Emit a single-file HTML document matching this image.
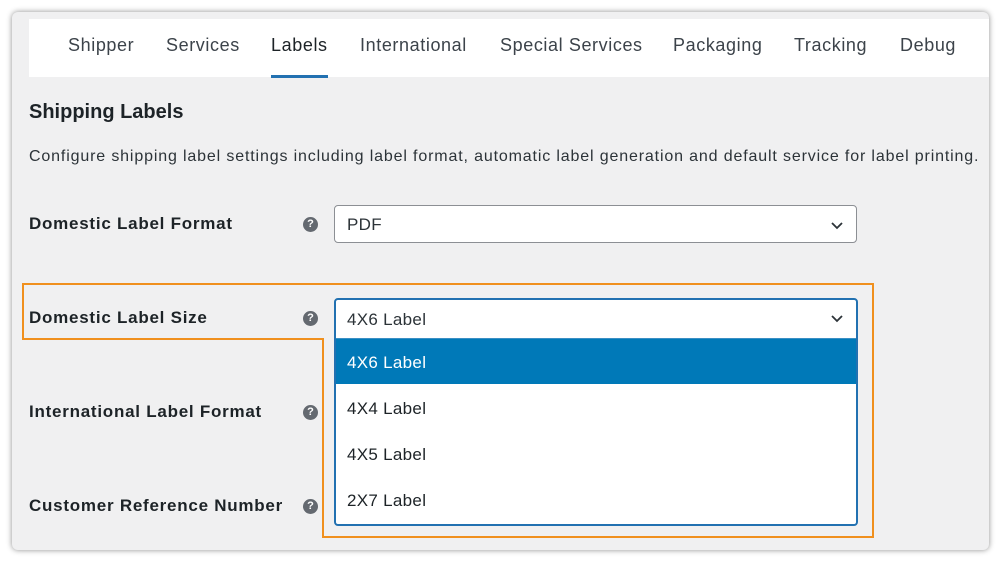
<!DOCTYPE html>
<html><head><style>
*{margin:0;padding:0;box-sizing:border-box}
body{width:1000px;height:562px;background:#fff;position:relative;overflow:hidden;font-family:"Liberation Sans",sans-serif;color:#1d2327}
.panel{position:absolute;left:12px;top:12px;width:977px;height:538px;background:#f0f0f1;border-radius:6px;box-shadow:0 0 6px rgba(0,0,0,.45);overflow:hidden}
.tabs{position:absolute;left:17px;top:7px;right:0;height:58px;background:#fff}
.tab{position:absolute;top:16px;font-size:18px;color:#3c434a;letter-spacing:.6px}
.a{position:absolute;font-size:17px}
.lbl{position:absolute;font-size:17px;font-weight:bold;letter-spacing:.75px}
.q{position:absolute;width:15px;height:15px;border-radius:50%;background:#646970;color:#fff;font-size:11px;font-weight:bold;text-align:center;line-height:15px}
.sel{position:absolute;background:#fff;border:1px solid #8c8f94;border-radius:4px;font-size:17px;color:#2c3338;letter-spacing:.3px}
.chev{position:absolute;right:12px;top:12px}
.opt{position:absolute;left:12px;font-size:17px;color:#1d2327}
</style></head><body>
<div class="panel">
 <div class="tabs">
  <div class="tab" style="left:39px">Shipper</div>
  <div class="tab" style="left:137px">Services</div>
  <div class="tab" style="left:242px;color:#1d2327">Labels</div>
  <div style="position:absolute;left:242px;top:56px;width:57px;height:3px;background:#2271b1"></div>
  <div class="tab" style="left:331px">International</div>
  <div class="tab" style="left:471px">Special Services</div>
  <div class="tab" style="left:644px">Packaging</div>
  <div class="tab" style="left:765px">Tracking</div>
  <div class="tab" style="left:871px">Debug</div>
 </div>
 <div class="a" style="left:17px;top:89px;font-size:20px;font-weight:bold">Shipping Labels</div>
 <div class="a" style="left:17px;top:136px;font-size:16px;color:#2c3338;letter-spacing:.85px">Configure shipping label settings including label format, automatic label generation and default service for label printing.</div>
 <div class="lbl" style="left:17px;top:202px">Domestic Label Format</div>
 <div class="q" style="left:291px;top:205px">?</div>
 <div class="sel" style="left:322px;top:193px;width:523px;height:38px"><span style="position:absolute;left:12px;top:9px">PDF</span>
  <svg class="chev" width="14" height="14" viewBox="0 0 14 14"><path d="M2 5l5 5 5-5" fill="none" stroke="#2c3338" stroke-width="1.8"/></svg></div>
 <div class="lbl" style="left:17px;top:296px">Domestic Label Size</div>
 <div class="q" style="left:291px;top:299px">?</div>
 <div class="lbl" style="left:17px;top:390px">International Label Format</div>
 <div class="q" style="left:291px;top:393px">?</div>
 <div class="lbl" style="left:17px;top:484px">Customer Reference Number</div>
 <div class="q" style="left:291px;top:487px">?</div>
 <div class="sel" style="left:322px;top:286px;width:524px;height:228px;border:2px solid #2271b1;overflow:hidden">
  <span style="position:absolute;left:11px;top:10px">4X6 Label</span>
  <svg class="chev" width="14" height="14" viewBox="0 0 14 14" style="top:11px"><path d="M2 5l5 5 5-5" fill="none" stroke="#2c3338" stroke-width="1.8"/></svg>
  <div style="position:absolute;left:0;right:0;top:38px;height:46px;background:#0079b8;border-top:1px solid #3a8fc4"></div>
  <div class="opt" style="top:53px;color:#fff;left:11px">4X6 Label</div>
  <div class="opt" style="top:99px;left:11px">4X4 Label</div>
  <div class="opt" style="top:145px;left:11px">4X5 Label</div>
  <div class="opt" style="top:191px;left:11px">2X7 Label</div>
 </div>
</div>
<svg width="1000" height="562" style="position:absolute;left:0;top:0">
 <path d="M23 284H873V537H323V339H23Z" fill="none" stroke="#f0901e" stroke-width="2"/>
</svg>
</body></html>
